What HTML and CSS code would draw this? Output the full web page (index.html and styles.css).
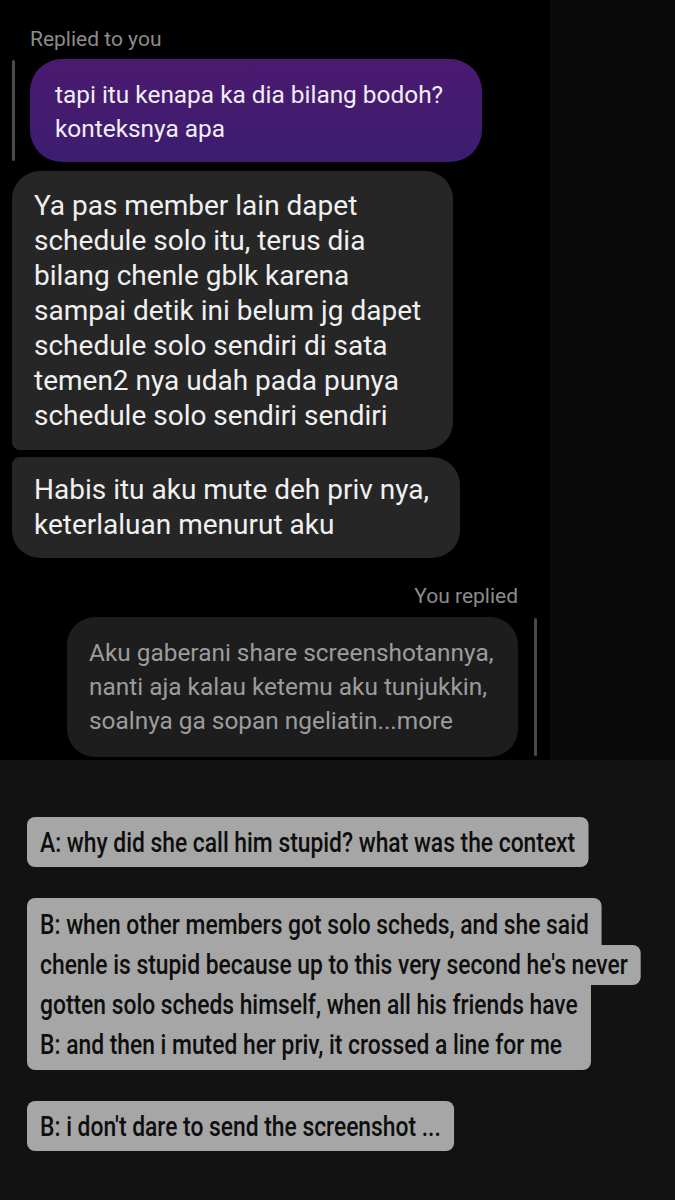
FILE: index.html
```html
<!DOCTYPE html>
<html lang="id">
<head>
<meta charset="utf-8">
<title>Chat</title>
<link rel="stylesheet" href="styles.css">
</head>
<body>
<div class="top">
  <div class="shot">
    <div class="label">Replied to you</div>
    <div class="reply-group">
      <div class="bar"></div>
      <div class="bubble purple">tapi itu kenapa ka dia bilang bodoh?<br>konteksnya apa</div>
    </div>
    <div class="bubble gray first">Ya pas member lain dapet<br>schedule solo itu, terus dia<br>bilang chenle gblk karena<br>sampai detik ini belum jg dapet<br>schedule solo sendiri di sata<br>temen2 nya udah pada punya<br>schedule solo sendiri sendiri</div>
    <div class="bubble gray second">Habis itu aku mute deh priv nya,<br>keterlaluan menurut aku</div>
    <div class="label right">You replied</div>
    <div class="quote-group">
      <div class="bubble quote">Aku gaberani share screenshotannya,<br>nanti aja kalau ketemu aku tunjukkin,<br>soalnya ga sopan ngeliatin...more</div>
      <div class="bar"></div>
    </div>
  </div>
  <div class="filler"></div>
</div>
<div class="captions">
  <div class="capwrap">
    <div class="cap">A: why did she call him stupid? what was the context</div>
    <div class="stack">
      <div class="ln l1">B: when other members got solo scheds, and she said</div>
      <div class="ln l2">chenle is stupid because up to this very second he's never</div>
      <div class="ln l3">gotten solo scheds himself, when all his friends have<br>B: and then i muted her priv, it crossed a line for me</div>
    </div>
    <div class="cap">B: i don't dare to send the screenshot ...</div>
  </div>
</div>
</body>
</html>
```

FILE: styles.css
```css
html, body {
  margin: 0;
  padding: 0;
  background: #121212;
}
body {
  width: 675px;
  height: 1200px;
  overflow: hidden;
  font-family: Roboto, "Noto Sans", sans-serif;
}
.top {
  display: flex;
  height: 760px;
}
.shot {
  width: 550px;
  height: 760px;
  background: #000;
  display: flex;
  flex-direction: column;
  align-items: flex-start;
}
.filler {
  flex: 1;
  background: #0a0a0a;
}
.label {
  font-size: 21px;
  line-height: 25px;
  color: #8c8c8c;
  margin: 27px 0 0 30px;
}
.label.right {
  align-self: flex-end;
  margin: 26px 32px 0 0;
}
.reply-group {
  display: flex;
  gap: 15px;
  margin: 7px 0 0 12px;
}
.bar {
  width: 3px;
  background: #4a4a4a;
  border-radius: 2px;
  margin: 1px 0;
}
.bubble {
  box-sizing: border-box;
  white-space: nowrap;
}
.purple {
  width: 452px;
  padding: 19px 25px 16px;
  font-size: 24.4px;
  line-height: 34px;
  color: #f2eef6;
  border-radius: 32px;
  background: linear-gradient(180deg, #4b1a6f 0%, #3c1d70 100%);
}
.gray {
  background: #262626;
  color: #f0f0f0;
  font-size: 28px;
  line-height: 35px;
  padding: 17px 22px;
  margin-left: 12px;
}
.gray.first {
  width: 441px;
  margin-top: 9px;
  border-radius: 28px 28px 28px 8px;
}
.gray.second {
  width: 448px;
  margin-top: 7px;
  padding: 15px 22px 16px;
  border-radius: 8px 28px 28px 28px;
}
.quote-group {
  display: flex;
  gap: 16px;
  align-self: flex-end;
  margin: 8px 13px 0 0;
}
.quote {
  width: 451px;
  background: #1d1d1d;
  color: #9c9c9c;
  font-size: 24.4px;
  line-height: 34px;
  padding: 19px 22px 19px;
  border-radius: 28px;
}
.captions {
  padding: 57px 0 0 27px;
  font-family: Roboto, "Noto Sans", sans-serif;
  font-weight: 500;
  font-size: 28px;
  color: #0e0e0e;
}
.capwrap {
  display: flex;
  flex-direction: column;
  align-items: flex-start;
  gap: 31px;
  transform: scaleX(0.815);
  transform-origin: 0 0;
}
.cap {
  background: #a6a6a6;
  border-radius: 10px / 8px;
  padding: 6px 16px 4px;
  line-height: 40px;
  white-space: nowrap;
}
.stack {
  display: flex;
  flex-direction: column;
  align-items: flex-start;
}
.ln {
  background: #a6a6a6;
  padding: 0 16px;
  line-height: 40px;
  white-space: nowrap;
}
.l1 {
  padding-top: 7px;
  border-radius: 10px 10px 0 0 / 8px 8px 0 0;
}
.l2 {
  border-radius: 0 10px 10px 0 / 0 8px 8px 0;
}
.l3 {
  padding-bottom: 5px;
  border-radius: 0 0 10px 10px / 0 0 8px 8px;
}
```
